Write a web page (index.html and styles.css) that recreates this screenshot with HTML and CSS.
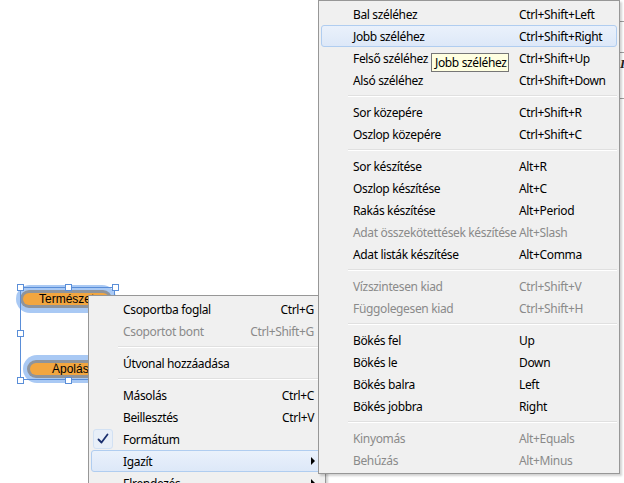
FILE: index.html
```html
<!DOCTYPE html>
<html>
<head>
<meta charset="utf-8">
<link rel="stylesheet" href="styles.css">
</head>
<body>
<div class="screen">
  <div class="sheet-edge">
    <div class="edge-line l1"></div>
    <div class="edge-line l2"></div>
    <div class="edge-glyph">I</div>
    <div class="edge-line l3"></div>
  </div>

  <div class="node node-a"><div class="ring"><div class="fill">Természet</div></div></div>
  <div class="node node-b"><div class="ring"><div class="fill">Ápolás</div></div></div>
  <div class="selection"></div>
  <span class="handle h-tl"></span>
  <span class="handle h-tm"></span>
  <span class="handle h-tr"></span>
  <span class="handle h-ml"></span>
  <span class="handle h-bl"></span>
  <span class="handle h-bm"></span>

  <div class="menu main-menu">
    <div class="item"><span class="label">Csoportba foglal</span><span class="key">Ctrl+G</span></div>
    <div class="item disabled"><span class="label">Csoportot bont</span><span class="key">Ctrl+Shift+G</span></div>
    <div class="sep"></div>
    <div class="item"><span class="label">Útvonal hozzáadása</span><span class="key"></span></div>
    <div class="sep"></div>
    <div class="item"><span class="label">Másolás</span><span class="key">Ctrl+C</span></div>
    <div class="item"><span class="label">Beillesztés</span><span class="key">Ctrl+V</span></div>
    <div class="item checked">
      <span class="check"><svg width="16" height="16" viewBox="0 0 16 16"><path d="M3.5 8.5 L6.5 11.5 L12.5 3.5" fill="none" stroke="#1a2f6e" stroke-width="1.8" stroke-linecap="round" stroke-linejoin="round"/></svg></span>
      <span class="label">Formátum</span><span class="key"></span>
    </div>
    <div class="item hot"><span class="label">Igazít</span><span class="arrow"></span></div>
    <div class="item"><span class="label">Elrendezés</span><span class="arrow"></span></div>
  </div>

  <div class="menu sub-menu">
    <div class="item"><span class="label">Bal széléhez</span><span class="key">Ctrl+Shift+Left</span></div>
    <div class="item hot"><span class="label">Jobb széléhez</span><span class="key">Ctrl+Shift+Right</span></div>
    <div class="item"><span class="label">Felső széléhez</span><span class="key">Ctrl+Shift+Up</span></div>
    <div class="item"><span class="label">Alsó széléhez</span><span class="key">Ctrl+Shift+Down</span></div>
    <div class="sep"></div>
    <div class="item"><span class="label">Sor közepére</span><span class="key">Ctrl+Shift+R</span></div>
    <div class="item"><span class="label">Oszlop közepére</span><span class="key">Ctrl+Shift+C</span></div>
    <div class="sep"></div>
    <div class="item"><span class="label">Sor készítése</span><span class="key">Alt+R</span></div>
    <div class="item"><span class="label">Oszlop készítése</span><span class="key">Alt+C</span></div>
    <div class="item"><span class="label">Rakás készítése</span><span class="key">Alt+Period</span></div>
    <div class="item disabled"><span class="label">Adat összekötettések készítése</span><span class="key">Alt+Slash</span></div>
    <div class="item"><span class="label">Adat listák készítése</span><span class="key">Alt+Comma</span></div>
    <div class="sep"></div>
    <div class="item disabled"><span class="label">Vízszintesen kiad</span><span class="key">Ctrl+Shift+V</span></div>
    <div class="item disabled"><span class="label">Függolegesen kiad</span><span class="key">Ctrl+Shift+H</span></div>
    <div class="sep"></div>
    <div class="item"><span class="label">Bökés fel</span><span class="key">Up</span></div>
    <div class="item"><span class="label">Bökés le</span><span class="key">Down</span></div>
    <div class="item"><span class="label">Bökés balra</span><span class="key">Left</span></div>
    <div class="item"><span class="label">Bökés jobbra</span><span class="key">Right</span></div>
    <div class="sep"></div>
    <div class="item disabled"><span class="label">Kinyomás</span><span class="key">Alt+Equals</span></div>
    <div class="item disabled"><span class="label">Behúzás</span><span class="key">Alt+Minus</span></div>
  </div>

  <div class="tooltip">Jobb széléhez</div>
</div>
</body>
</html>
```

FILE: styles.css
```css
html, body {
  margin: 0;
  padding: 0;
  background: #ffffff;
}

.screen {
  position: relative;
  width: 624px;
  height: 483px;
  overflow: hidden;
  background: #ffffff;
  font-family: "Noto Sans", "Open Sans", sans-serif;
  font-size: 12px;
  letter-spacing: -0.35px;
  color: #000000;
}

/* sheet behind submenu on the right edge */
.sheet-edge {
  position: absolute;
  left: 619px;
  top: 0;
  width: 5px;
  height: 483px;
}
.edge-line {
  position: absolute;
  left: 0;
  width: 5px;
  height: 1px;
  background: #a0a0a0;
}
.edge-line.l1 { top: 21px; }
.edge-line.l2 { top: 52px; }
.edge-line.l3 { top: 98px; }
.edge-glyph {
  position: absolute;
  left: 1px;
  top: 56px;
  font-family: "Liberation Serif", serif;
  font-style: italic;
  font-weight: bold;
  font-size: 13px;
  color: #222;
}

/* diagram nodes */
.node {
  position: absolute;
  box-sizing: border-box;
  height: 28px;
  padding: 5px 4px;
  border-radius: 14px;
  background: #a9c9f4;
}
.node .ring {
  height: 18px;
  box-sizing: border-box;
  padding: 3px;
  border-radius: 9px;
  background: #8f949b;
}
.node .fill {
  height: 12px;
  border-radius: 6px;
  background: #f2a640;
  font-family: "Liberation Sans", Arial, sans-serif;
  font-size: 12px;
  letter-spacing: 0;
  line-height: 12px;
  white-space: nowrap;
  overflow: hidden;
}
.node-a { left: 16px; top: 285px; width: 100px; }
.node-a .fill { padding-left: 16px; }
.node-b { left: 23px; top: 355px; width: 92px; }
.node-b .fill { padding-left: 22px; }

.selection {
  position: absolute;
  left: 20px;
  top: 287px;
  width: 95px;
  height: 93px;
  border: 1px solid #5a8ed8;
  box-sizing: border-box;
}
.handle {
  position: absolute;
  width: 7px;
  height: 7px;
  box-sizing: border-box;
  background: #ffffff;
  border: 1px solid #5a8ed8;
}
.h-tl { left: 17px; top: 284px; }
.h-tm { left: 65px; top: 284px; }
.h-tr { left: 112px; top: 284px; }
.h-ml { left: 17px; top: 330px; }
.h-bl { left: 17px; top: 377px; }
.h-bm { left: 65px; top: 377px; }

/* menus */
.menu {
  position: absolute;
  box-sizing: border-box;
  background: #f0f0f0;
  border: 1px solid #979797;
  padding: 2px;
  box-shadow: 2px 2px 2px rgba(0, 0, 0, 0.18);
}
.main-menu {
  left: 88px;
  top: 295px;
  width: 238px;
  height: 200px;
}
.sub-menu {
  left: 318px;
  top: 0;
  width: 302px;
  height: 474px;
}

.item {
  position: relative;
  box-sizing: border-box;
  height: 22px;
  display: flex;
  align-items: center;
  justify-content: space-between;
  padding: 0 8px 0 31px;
  border: 1px solid transparent;
  border-radius: 3px;
  white-space: nowrap;
}
.item.disabled { color: #8a8a8a; }
.item.hot {
  border-color: #b0cdf0;
  background: linear-gradient(#eaf1fb, #dde8f8);
}
.sub-menu .item {
  display: grid;
  grid-template-columns: 166px 1fr;
  justify-content: start;
}

.sep {
  height: 1px;
  margin: 4px 0 4px 27px;
  background: #e0e0e0;
  border-bottom: 1px solid #ffffff;
}

.check {
  position: absolute;
  left: 1px;
  top: 0;
  width: 20px;
  height: 20px;
  box-sizing: border-box;
  border: 1px solid #d2e1f3;
  border-radius: 3px;
  background: #e8eff8;
  display: flex;
  align-items: center;
  justify-content: center;
}

.arrow {
  width: 0;
  height: 0;
  border-top: 4px solid transparent;
  border-bottom: 4px solid transparent;
  border-left: 4px solid #000000;
  margin-right: -1px;
}

.tooltip {
  position: absolute;
  left: 431px;
  top: 53px;
  box-sizing: border-box;
  width: 78px;
  height: 19px;
  padding: 0 3px;
  background: #ffffe1;
  border: 1px solid #767676;
  line-height: 17px;
  white-space: nowrap;
}
```
